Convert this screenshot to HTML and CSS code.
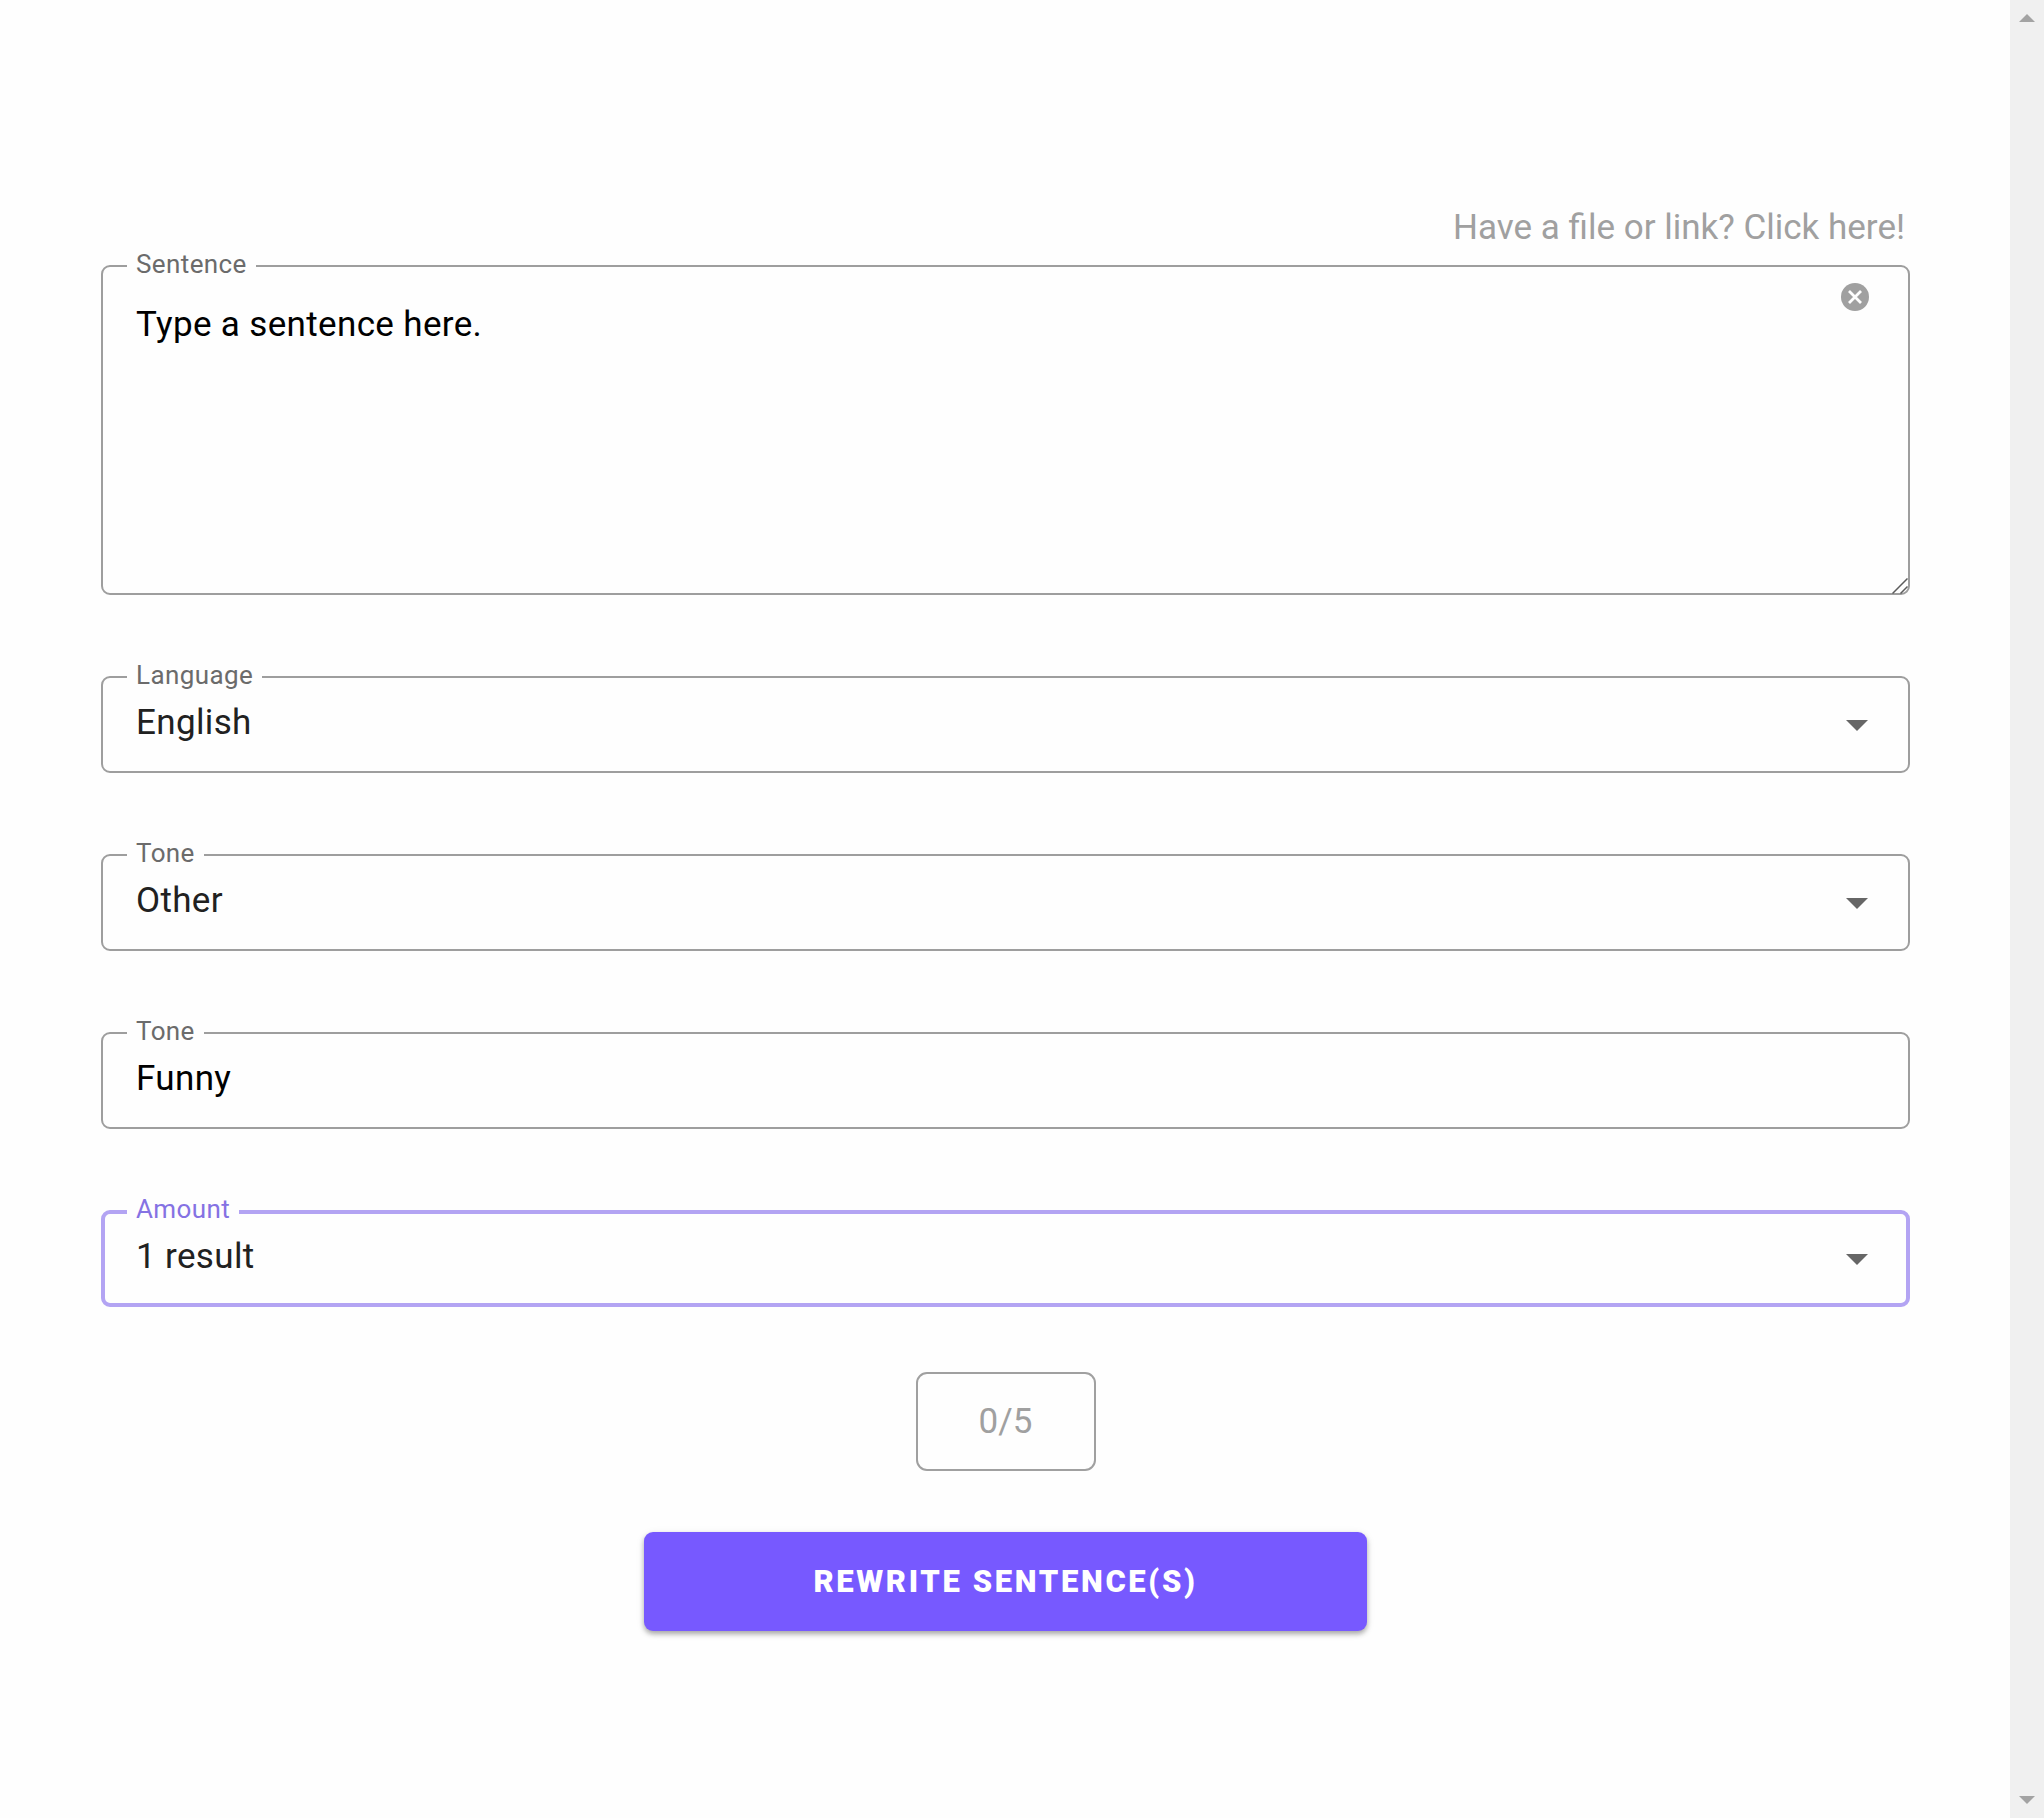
FILE: index.html
```html
<!DOCTYPE html>
<html lang="en">
<head>
<meta charset="utf-8">
<title>Sentence Rewriter</title>
<link rel="stylesheet" href="styles.css">
</head>
<body>
<div class="shell">
  <main class="page">
    <form class="form">
      <div class="top-link"><a href="#">Have a file or link? Click here!</a></div>

      <div class="field field-area">
        <textarea class="control area" id="sentence">Type a sentence here.</textarea>
        <label class="label" for="sentence">Sentence</label>
        <button class="clear" type="button" aria-label="Clear">
          <svg viewBox="0 0 28 28" width="28" height="28"><circle cx="14" cy="14" r="14" fill="#a0a0a0"/><path d="M8 8l12 12M20 8l-12 12" stroke="#fefefe" stroke-width="2.8" fill="none"/></svg>
        </button>
        <svg class="grip" viewBox="0 0 16 16" width="16" height="16"><path d="M0.5 15.5l15-15M8.5 15.5l7-7" stroke="#5c5c5c" stroke-width="1.5" fill="none"/></svg>
      </div>

      <div class="field">
        <select class="control" id="language"><option>English</option></select>
        <label class="label" for="language">Language</label>
        <svg class="caret" viewBox="0 0 22 11" width="22" height="11"><path d="M0 0h22L11 11z" fill="#666"/></svg>
      </div>

      <div class="field">
        <select class="control" id="tone"><option>Other</option></select>
        <label class="label" for="tone">Tone</label>
        <svg class="caret" viewBox="0 0 22 11" width="22" height="11"><path d="M0 0h22L11 11z" fill="#666"/></svg>
      </div>

      <div class="field">
        <input class="control text" id="custom-tone" type="text" value="Funny">
        <label class="label" for="custom-tone">Tone</label>
      </div>

      <div class="field active">
        <select class="control" id="amount"><option>1 result</option></select>
        <label class="label" for="amount">Amount</label>
        <svg class="caret" viewBox="0 0 22 11" width="22" height="11"><path d="M0 0h22L11 11z" fill="#666"/></svg>
      </div>

      <div class="actions">
        <div class="count">0/5</div>
        <button class="submit" type="submit">REWRITE SENTENCE(S)</button>
      </div>
    </form>
  </main>
  <div class="scrollbar" aria-hidden="true">
    <svg viewBox="0 0 16 8" width="16" height="8"><path d="M8 0l8 8H0z" fill="#a3a3a3"/></svg>
    <svg viewBox="0 0 16 8" width="16" height="8"><path d="M0 0h16L8 8z" fill="#a3a3a3"/></svg>
  </div>
</div>
</body>
</html>
```

FILE: styles.css
```css
* {
  box-sizing: border-box;
}

body {
  margin: 0;
  background: #fefefe;
  font-family: Roboto, "Liberation Sans", sans-serif;
  font-size: 35px;
  color: #212121;
}

.shell {
  display: flex;
  min-height: 100vh;
}

.page {
  flex: 1;
  min-width: 0;
  padding: 208px 100px 80px 101px;
}

.form {
  display: flex;
  flex-direction: column;
  gap: 81px;
}

.top-link {
  margin-bottom: -64px;
  padding-right: 5px;
  line-height: 40px;
  text-align: right;
}

.top-link a {
  color: #a0a0a0;
  text-decoration: none;
}

.field {
  position: relative;
  display: flex;
}

.control {
  appearance: none;
  width: 100%;
  height: 97px;
  margin: 0;
  padding: 0 33px 4px;
  border: 2px solid #9e9e9e;
  border-radius: 9px;
  outline: none;
  background: transparent;
  font: inherit;
  letter-spacing: 0.01em;
  color: #212121;
}

.text,
.area {
  color: #000;
}

.area {
  height: 330px;
  padding-top: 36px;
  line-height: 44px;
  resize: none;
}

.label {
  position: absolute;
  top: -17px;
  left: 26px;
  padding: 0 9px;
  background: #fefefe;
  font-size: 26px;
  line-height: 32px;
  letter-spacing: 0.015em;
  color: #6b6b6b;
}

.active .control {
  padding: 0 31px 4px;
  border: 4px solid #b3a4f3;
}

.active .label {
  color: #8572e3;
}

.caret {
  position: absolute;
  top: 44px;
  right: 42px;
}

.clear {
  position: absolute;
  top: 18px;
  right: 41px;
  display: flex;
  padding: 0;
  border: 0;
  background: none;
}

.grip {
  position: absolute;
  right: 2px;
  bottom: 1px;
}

.actions {
  display: flex;
  flex-direction: column;
  align-items: center;
  gap: 61px;
  margin-top: -16px;
}

.count {
  width: 180px;
  border: 2px solid #a0a0a0;
  border-radius: 11px;
  line-height: 95px;
  text-align: center;
  color: #a0a0a0;
}

.submit {
  width: 40%;
  height: 99px;
  border: 0;
  border-radius: 9px;
  background: #7759ff;
  box-shadow: 0 3px 5px rgba(0, 0, 0, 0.3), 0 2px 10px rgba(0, 0, 0, 0.08);
  font: 900 31px Roboto, "Liberation Sans", sans-serif;
  letter-spacing: 0.085em;
  color: #fff;
}

.scrollbar {
  display: flex;
  flex-direction: column;
  align-items: center;
  justify-content: space-between;
  width: 34px;
  padding: 14px 0;
  background: #f0f0f0;
}
```
